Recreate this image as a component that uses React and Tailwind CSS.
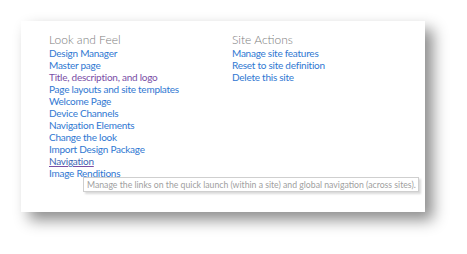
import React from 'react';

const lookAndFeel = [
  { label: 'Design Manager' },
  { label: 'Master page' },
  { label: 'Title, description, and logo', visited: true },
  { label: 'Page layouts and site templates' },
  { label: 'Welcome Page' },
  { label: 'Device Channels' },
  { label: 'Navigation Elements' },
  { label: 'Change the look' },
  { label: 'Import Design Package' },
  { label: 'Navigation', hover: true },
  { label: 'Image Renditions' },
];

const siteActions = ['Manage site features', 'Reset to site definition', 'Delete this site'];

const LinkItem = ({ label, visited, hover }) => (
  <a
    href="#"
    className={`block h-[12px] leading-[12px] ${
      visited ? 'text-[#7a4ea6]' : hover ? 'text-[#4066b5] underline decoration-[#7a4ea6]' : 'text-[#2f78d2]'
    }`}
  >
    {label}
  </a>
);

export default function App() {
  return (
    <div className="w-[467px] h-[254px] bg-white pt-[21px] pl-[21px]" style={{ fontFamily: 'Lato, "Open Sans", sans-serif' }}>
      <div className="relative w-[404px] h-[191px] bg-white shadow-[8px_8px_14px_rgba(0,0,0,0.45)] pt-[13px] pl-[28px] text-[10px] tracking-[-0.25px]">
        <div className="flex">
          <div className="w-[183px]">
            <div className="h-[13px] leading-[12px] text-[12px] font-light tracking-normal text-[#7d7d7d]">Look and Feel</div>
            {lookAndFeel.map((item) => (
              <LinkItem key={item.label} {...item} />
            ))}
          </div>
          <div>
            <div className="h-[13px] leading-[12px] text-[12px] font-light tracking-normal text-[#7d7d7d]">Site Actions</div>
            {siteActions.map((s) => (
              <LinkItem key={s} label={s} />
            ))}
          </div>
        </div>
        <div className="absolute left-[62px] top-[156px] h-[15px] w-[336px] border border-[#cfcfcf] bg-white shadow-[2px_2px_2px_rgba(0,0,0,0.15)] px-[3px] text-[8.7px] tracking-normal leading-[13px] text-[#a0a0a0] whitespace-nowrap">
          Manage the links on the quick launch (within a site) and global navigation (across sites).
        </div>
      </div>
    </div>
  );
}
